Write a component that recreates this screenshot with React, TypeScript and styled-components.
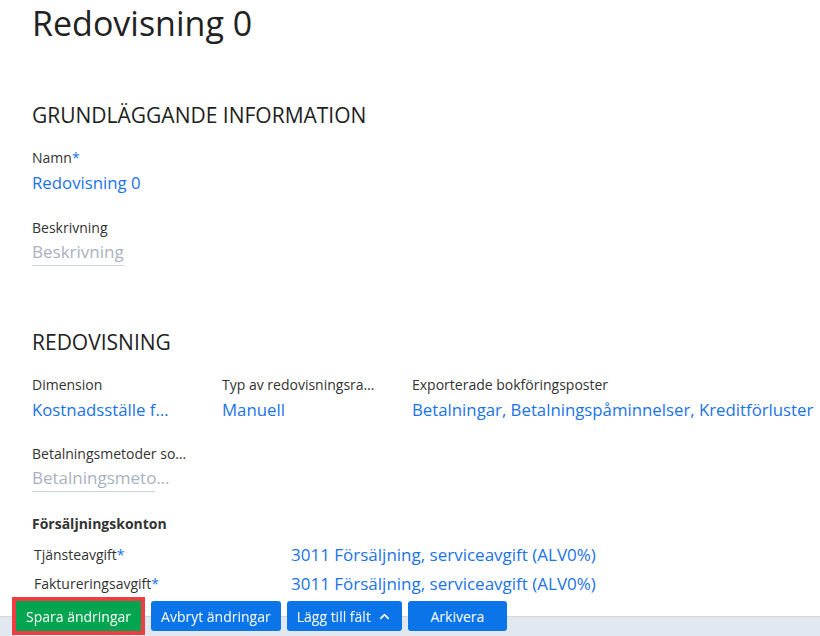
import React from 'react';
import styled, { createGlobalStyle } from 'styled-components';
import { ChevronUp } from 'lucide-react';

const GlobalStyle = createGlobalStyle`
    body {
        margin: 0;
        background: #ffffff;
        font-family: "Open Sans", "Noto Sans", sans-serif;
        color: #333;
    }
`;

const StyledPage = styled.div`
    padding: 0 0 0 32px;
`;

const StyledTitle = styled.h1`
    margin: 0;
    font-size: 34px;
    line-height: 46px;
    font-weight: 400;
    color: #222;
`;

const StyledSection = styled.section<{ $top: number }>`
    display: flex;
    flex-direction: column;
    margin-top: ${props => props.$top}px;
`;

const StyledSectionTitle = styled.h2`
    margin: 0 0 18px;
    font-size: 21px;
    line-height: 28px;
    font-weight: 400;
    color: #222;
`;

const StyledGrid = styled.div`
    display: grid;
    grid-template-columns: 190px 190px 1fr;
    row-gap: 19px;
`;

const StyledField = styled.div<{ $wide?: boolean }>`
    display: flex;
    flex-direction: column;
    max-width: ${props => props.$wide ? 'none' : '156px'};
    margin-bottom: 20px;
`;

const StyledGridField = styled(StyledField)`
    margin-bottom: 0;
`;

const StyledLabel = styled.span`
    font-size: 14px;
    line-height: 22px;
    color: #333;
    white-space: nowrap;
    overflow: hidden;
    text-overflow: ellipsis;
`;

const StyledStar = styled.span`
    color: #1a73e8;
`;

const StyledValue = styled.span<{ $narrow?: boolean }>`
    max-width: ${props => props.$narrow ? '138px' : 'none'};
    font-size: 16.8px;
    line-height: 28px;
    color: #1a73e8;
    white-space: nowrap;
    overflow: hidden;
    text-overflow: ellipsis;
`;

const StyledPlaceholder = styled.span<{ $width?: number }>`
    align-self: flex-start;
    font-size: 17px;
    line-height: 26px;
    color: #a8b2bf;
    white-space: nowrap;
    border-bottom: 1px solid #c9d3de;
    width: ${props => props.$width ? props.$width + 'px' : 'auto'};
`;

const StyledSubTitle = styled.div`
    margin-top: 22px;
    font-size: 14px;
    line-height: 20px;
    font-weight: 700;
    color: #333;
`;

const StyledAccountTable = styled.div`
    display: grid;
    grid-template-columns: 257px 1fr;
    grid-auto-rows: 29px;
    align-items: center;
    margin-top: 6px;
    padding-left: 2px;
`;

const StyledRowLabel = styled.span`
    font-size: 14px;
    color: #333;
`;

const StyledRowValue = styled.span`
    font-size: 17px;
    color: #1a73e8;
`;

const StyledFooter = styled.footer`
    position: fixed;
    left: 0;
    right: 0;
    bottom: 0;
    height: 38px;
    display: flex;
    align-items: flex-start;
    gap: 6px;
    padding: 3px 0 0 16px;
    box-sizing: border-box;
    background: linear-gradient(to bottom, transparent 18px, #cfd8e2 18px, #cfd8e2 19px, #e2e8f0 19px);
`;

const StyledButton = styled.button<{ $variant?: 'save' | 'primary'; $minWidth?: number }>`
    height: 30px;
    padding: 0 10px;
    min-width: ${props => props.$minWidth ? props.$minWidth + 'px' : '0'};
    display: flex;
    align-items: center;
    justify-content: center;
    gap: 6px;
    border: none;
    border-radius: ${props => props.$variant === 'save' ? '0' : '3px'};
    background: ${props => props.$variant === 'save' ? '#04a550' : '#0a74e8'};
    box-shadow: ${props => props.$variant === 'save' ? '0 0 0 4px #ef3d45' : 'none'};
    margin-right: ${props => props.$variant === 'save' ? '4px' : '0'};
    color: #fff;
    font-family: "Open Sans", "Noto Sans", sans-serif;
    font-size: 14px;
    white-space: nowrap;
`;

interface FieldProps {
    label: string,
    value?: string,
    placeholder?: string,
    required?: boolean,
    narrow?: boolean,
    underline?: number
}

const Field = (props: FieldProps) => {
    const { label, value, placeholder, required, narrow, underline } = props;
    return (
        <>
            <StyledLabel>{label}{required && <StyledStar>*</StyledStar>}</StyledLabel>
            {value
                ? <StyledValue $narrow={narrow}>{value}</StyledValue>
                : <StyledPlaceholder $width={underline}>{placeholder}</StyledPlaceholder>}
        </>
    );
};

const accounts = [
    { label: 'Tjänsteavgift', value: '3011 Försäljning, serviceavgift (ALV0%)', required: true },
    { label: 'Faktureringsavgift', value: '3011 Försäljning, serviceavgift (ALV0%)', required: true },
    { label: 'Påminnelseavgift', value: '', required: false },
];

export default function App() {
    return (
        <>
            <GlobalStyle />
            <StyledPage>
                <StyledTitle>Redovisning 0</StyledTitle>

                <StyledSection $top={55}>
                    <StyledSectionTitle>GRUNDLÄGGANDE INFORMATION</StyledSectionTitle>
                    <StyledField $wide>
                        <Field label="Namn" required value="Redovisning 0" />
                    </StyledField>
                    <StyledField $wide>
                        <Field label="Beskrivning" placeholder="Beskrivning" />
                    </StyledField>
                </StyledSection>

                <StyledSection $top={42}>
                    <StyledSectionTitle>REDOVISNING</StyledSectionTitle>
                    <StyledGrid>
                        <StyledGridField>
                            <Field label="Dimension" value="Kostnadsställe för redovisning" narrow />
                        </StyledGridField>
                        <StyledGridField>
                            <Field label="Typ av redovisningsrapport" value="Manuell" />
                        </StyledGridField>
                        <StyledGridField $wide>
                            <Field label="Exporterade bokföringsposter" value="Betalningar, Betalningspåminnelser, Kreditförluster" />
                        </StyledGridField>
                        <StyledGridField>
                            <Field label="Betalningsmetoder som exporteras" placeholder="Betalningsmeto…" underline={123} />
                        </StyledGridField>
                    </StyledGrid>
                    <StyledSubTitle>Försäljningskonton</StyledSubTitle>
                    <StyledAccountTable>
                        {accounts.map(account => (
                            <React.Fragment key={account.label}>
                                <StyledRowLabel>{account.label}{account.required && <StyledStar>*</StyledStar>}</StyledRowLabel>
                                <StyledRowValue>{account.value}</StyledRowValue>
                            </React.Fragment>
                        ))}
                    </StyledAccountTable>
                </StyledSection>
            </StyledPage>

            <StyledFooter>
                <StyledButton $variant="save">Spara ändringar</StyledButton>
                <StyledButton>Avbryt ändringar</StyledButton>
                <StyledButton>Lägg till fält <ChevronUp size={15} strokeWidth={2.5} /></StyledButton>
                <StyledButton $minWidth={99}>Arkivera</StyledButton>
            </StyledFooter>
        </>
    );
}
